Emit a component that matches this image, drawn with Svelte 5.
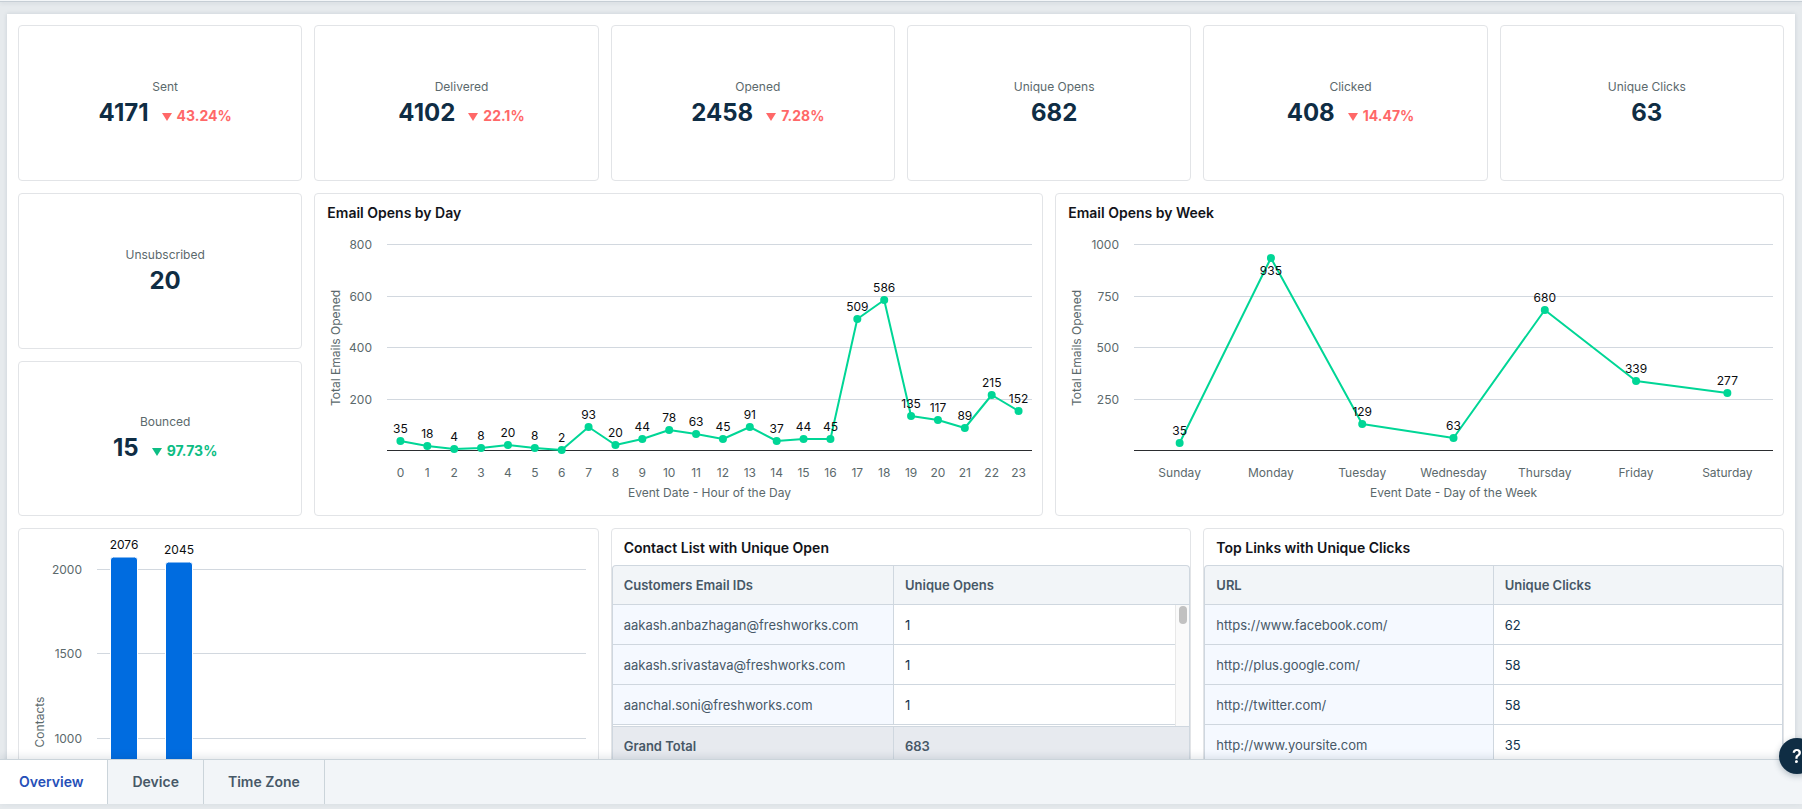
<script>
  const stats = [
    { label: 'Sent', value: '4171', change: '43.24%', tone: 'bad' },
    { label: 'Delivered', value: '4102', change: '22.1%', tone: 'bad' },
    { label: 'Opened', value: '2458', change: '7.28%', tone: 'bad' },
    { label: 'Unique Opens', value: '682' },
    { label: 'Clicked', value: '408', change: '14.47%', tone: 'bad' },
    { label: 'Unique Clicks', value: '63' }
  ];

  const sideStats = [
    { label: 'Unsubscribed', value: '20' },
    { label: 'Bounced', value: '15', change: '97.73%', tone: 'good' }
  ];

  const byDay = {
    title: 'Email Opens by Day',
    xTitle: 'Event Date - Hour of the Day',
    yTitle: 'Total Emails Opened',
    left: 72,
    max: 800,
    ticks: [800, 600, 400, 200],
    labels: Array.from({ length: 24 }, (_, i) => String(i)),
    values: [35, 18, 4, 8, 20, 8, 2, 93, 20, 44, 78, 63, 45, 91, 37, 44, 45, 509, 586, 135, 117, 89, 215, 152]
  };

  const byWeek = {
    title: 'Email Opens by Week',
    xTitle: 'Event Date - Day of the Week',
    yTitle: 'Total Emails Opened',
    left: 78,
    max: 1000,
    ticks: [1000, 750, 500, 250],
    labels: ['Sunday', 'Monday', 'Tuesday', 'Wednesday', 'Thursday', 'Friday', 'Saturday'],
    values: [35, 935, 129, 63, 680, 339, 277]
  };

  const contacts = {
    yTitle: 'Contacts',
    slots: 9,
    ticks: [2000, 1500, 1000],
    values: [2076, 2045]
  };

  const openers = [
    ['aakash.anbazhagan@freshworks.com', '1'],
    ['aakash.srivastava@freshworks.com', '1'],
    ['aanchal.soni@freshworks.com', '1']
  ];

  const links = [
    ['https://www.facebook.com/', '62'],
    ['http://plus.google.com/', '58'],
    ['http://twitter.com/', '58'],
    ['http://www.yoursite.com', '35']
  ];

  const tabs = ['Overview', 'Device', 'Time Zone'];

  const RIGHT = 10;
  const TOP = 14;
  const PLOT_HEIGHT = 206;
  const BAR_ZERO = 377;
  const BAR_WIDTH = 27;

  let active = $state('Overview');
  let dayWidth = $state(727);
  let weekWidth = $state(727);
  let barWidth = $state(579);

  function lineY(chart, value) {
    return TOP + PLOT_HEIGHT * (1 - value / chart.max);
  }

  function points(chart, width) {
    const step = (width - chart.left - RIGHT) / chart.values.length;
    return chart.values.map((value, i) => {
      const y = Math.ceil(lineY(chart, value));
      return {
        value,
        label: chart.labels[i],
        x: chart.left + step * (i + 0.5),
        y,
        // labels that would leave the plot go under the marker
        labelY: y < TOP + 20 ? y + 17 : y - 8
      };
    });
  }

  function barY(value) {
    return BAR_ZERO - (value * 337) / 2000;
  }
</script>

{#snippet statCard(stat)}
  <section class="card stat">
    <span class="stat-label">{stat.label}</span>
    <div class="stat-row">
      <span class="stat-value">{stat.value}</span>
      {#if stat.change}
        <span class="change {stat.tone}">
          <svg viewBox="0 0 10 8" width="10" height="8" fill="currentColor" aria-hidden="true">
            <path d="M0 0h10L5 8z" />
          </svg>
          {stat.change}
        </span>
      {/if}
    </div>
  </section>
{/snippet}

{#snippet lineChart(chart, width)}
  {@const pts = points(chart, width)}
  {@const mid = (chart.left + width - RIGHT) / 2}
  <svg class="chart" {width} height="285" role="img" aria-label={chart.title}>
    {#each chart.ticks as tick}
      {@const y = Math.round(lineY(chart, tick))}
      <rect class="grid-line" x={chart.left} {y} width={width - chart.left - RIGHT} height="1" />
      <text class="axis" x={chart.left - 15} y={y + 5} text-anchor="end">{tick}</text>
    {/each}
    <rect class="base-line" x={chart.left} y={TOP + PLOT_HEIGHT} width={width - chart.left - RIGHT} height="1" />
    <polyline class="series" points={pts.map((p) => `${p.x},${p.y}`).join(' ')} />
    {#each pts as p}
      <circle class="marker" cx={p.x} cy={p.y} r="4" />
      <text class="axis" x={p.x} y="247" text-anchor="middle">{p.label}</text>
    {/each}
    {#each pts as p}
      <text class="data" x={p.x} y={p.labelY} text-anchor="middle">{p.value}</text>
    {/each}
    <text class="axis" x={mid} y="267" text-anchor="middle">{chart.xTitle}</text>
    <text class="axis" transform="translate(25 118) rotate(-90)" text-anchor="middle">{chart.yTitle}</text>
  </svg>
{/snippet}

<div class="app">
  <div class="topbar"></div>

  <main class="board">
    <div class="panel">
      {#each stats as stat}
        {@render statCard(stat)}
      {/each}

      <div class="side">
        {#each sideStats as stat}
          {@render statCard(stat)}
        {/each}
      </div>

      <section class="card wide">
        <h2>{byDay.title}</h2>
        <div class="chart-box" bind:clientWidth={dayWidth}>
          {@render lineChart(byDay, dayWidth)}
        </div>
      </section>

      <section class="card wide">
        <h2>{byWeek.title}</h2>
        <div class="chart-box" bind:clientWidth={weekWidth}>
          {@render lineChart(byWeek, weekWidth)}
        </div>
      </section>

      <section class="card third">
        <div class="chart-box" bind:clientWidth={barWidth}>
          <svg class="chart" width={barWidth} height="440" role="img" aria-label={contacts.yTitle}>
            {#each contacts.ticks as tick}
              {@const y = Math.round(barY(tick))}
              <rect class="grid-line" x="78" {y} width={barWidth - 90} height="1" />
              <text class="axis" x="63" y={y + 5} text-anchor="end">{tick}</text>
            {/each}
            {#each contacts.values as value, i}
              {@const x = Math.round(78 + ((barWidth - 90) / contacts.slots) * (i + 0.5))}
              {@const y = Math.ceil(barY(value))}
              <rect class="bar" x={x - BAR_WIDTH / 2} {y} width={BAR_WIDTH} height={BAR_ZERO - y} rx="3" />
              <text class="data" {x} y={y - 8} text-anchor="middle">{value}</text>
            {/each}
            <rect class="base-line" x="78" y={BAR_ZERO} width={barWidth - 90} height="1" />
            <text class="axis" transform="translate(25 193) rotate(-90)" text-anchor="middle">{contacts.yTitle}</text>
          </svg>
        </div>
      </section>

      <section class="card third">
        <h2>Contact List with Unique Open</h2>
        <table class="scrolling">
          <thead>
            <tr><th>Customers Email IDs</th><th>Unique Opens</th></tr>
          </thead>
          <tbody>
            {#each openers as [email, count]}
              <tr><td>{email}</td><td>{count}</td></tr>
            {/each}
          </tbody>
          <tfoot>
            <tr><td>Grand Total</td><td>683</td></tr>
          </tfoot>
        </table>
      </section>

      <section class="card third">
        <h2>Top Links with Unique Clicks</h2>
        <table>
          <thead>
            <tr><th>URL</th><th>Unique Clicks</th></tr>
          </thead>
          <tbody>
            {#each links as [url, count]}
              <tr><td>{url}</td><td>{count}</td></tr>
            {/each}
          </tbody>
        </table>
      </section>
    </div>
  </main>

  <div class="tabs" role="tablist">
    {#each tabs as tab}
      <button
        class="tab"
        class:active={active === tab}
        role="tab"
        aria-selected={active === tab}
        onclick={() => (active = tab)}
      >
        {tab}
      </button>
    {/each}
  </div>

  <button class="help" title="Help">?</button>
</div>

<style>
  :global(body) {
    margin: 0;
  }

  .app {
    display: flex;
    flex-direction: column;
    height: 100vh;
    box-sizing: border-box;
    padding-bottom: 5px;
    overflow: hidden;
    background: #e6eaed;
    font-family: Inter, 'Liberation Sans', sans-serif;
    font-size: 12px;
    color: #12344d;
  }

  .topbar {
    flex: none;
    height: 1px;
    background: #f3f6f8;
    border-bottom: 1px solid #c6ced5;
    box-shadow: 0 1px 4px rgba(24, 50, 71, 0.12);
  }

  .board {
    flex: 1;
    min-height: 0;
    padding: 12px 7px 0;
    overflow-y: auto;
    scrollbar-width: none;
  }

  .panel {
    display: grid;
    grid-template-columns: repeat(12, minmax(0, 1fr));
    grid-template-rows: 156px 156px 155px;
    grid-auto-rows: minmax(156px, auto);
    gap: 12px;
    padding: 11px;
    background: #fff;
    box-shadow: 0 0 4px rgba(24, 50, 71, 0.14);
  }

  .card {
    box-sizing: border-box;
    border: 1px solid #e2e4e7;
    border-radius: 4px;
    background: #fff;
    overflow: hidden;
  }

  .stat {
    grid-column: span 2;
    display: flex;
    flex-direction: column;
    align-items: center;
    justify-content: center;
    padding: 0 0 0 10px;
  }

  .side {
    grid-column: span 2;
    grid-row: span 2;
    display: grid;
    grid-auto-rows: 1fr;
    gap: 12px;
  }

  .side .stat {
    grid-column: auto;
  }

  .wide {
    grid-column: span 5;
    grid-row: span 2;
  }

  .third {
    grid-column: span 4;
    grid-row: span 3;
  }

  .stat-label {
    line-height: 20px;
    color: #5b696c;
  }

  .stat-row {
    display: flex;
    align-items: baseline;
    gap: 13px;
    height: 32px;
    line-height: 32px;
  }

  .stat-value {
    font-size: 24px;
    font-weight: 700;
    color: #0f2d44;
  }

  .change {
    display: flex;
    align-items: baseline;
    gap: 5px;
    font-size: 14px;
    line-height: 20px;
    font-weight: 700;
  }

  .bad {
    color: #ff6868;
  }

  .good {
    color: #0dbd84;
  }

  h2 {
    margin: 0;
    padding: 9px 12px 7px;
    font-size: 14px;
    line-height: 20px;
    font-weight: 600;
    color: #12141a;
  }

  .chart-box {
    overflow: hidden;
  }

  .chart {
    display: block;
  }

  .axis {
    font-size: 12px;
    fill: #5b696c;
  }

  .data {
    font-size: 12px;
    fill: #0b0d10;
  }

  .grid-line {
    fill: #d2d8df;
  }

  .base-line {
    fill: #2b2d30;
  }

  .series {
    fill: none;
    stroke: #00d696;
    stroke-width: 2;
    stroke-linejoin: round;
  }

  .marker {
    fill: #00d696;
  }

  .bar {
    fill: #006ce0;
    stroke: #fff;
    stroke-width: 1;
  }

  table,
  thead,
  tbody,
  tfoot {
    display: block;
  }

  table {
    font-size: 13px;
    line-height: 20px;
  }

  tr {
    display: grid;
    grid-template-columns: 1fr 1fr;
  }

  th,
  td {
    padding: 10px 11px 9px;
    text-align: left;
    border-bottom: 1px solid #cfd7df;
  }

  th:first-child,
  td:first-child {
    border-right: 1px solid #cfd7df;
  }

  thead {
    background: #f2f5f8;
    border: 1px solid #cfd7df;
    border-bottom: 0;
    border-radius: 4px 4px 0 0;
  }

  th {
    padding: 9px 11px;
    font-weight: 600;
    color: #475867;
  }

  tbody,
  tfoot {
    border: solid #cfd7df;
    border-width: 0 1px;
  }

  td {
    color: #12344d;
  }

  td:first-child {
    background: #f5f9ff;
    color: #475867;
  }

  .scrolling thead tr,
  .scrolling tfoot tr {
    grid-template-columns: calc(50% - 7px) 1fr;
  }

  .scrolling tbody {
    position: relative;
    height: 121px;
    padding-right: 14px;
    overflow: hidden;
  }

  /* scroll track and thumb */
  .scrolling tbody::before {
    content: '';
    position: absolute;
    top: 0;
    right: 0;
    bottom: 0;
    width: 13px;
    background: #fafafa;
    border-left: 1px solid #e8e8e8;
  }

  .scrolling tbody::after {
    content: '';
    position: absolute;
    top: 1px;
    right: 2px;
    width: 8px;
    height: 18px;
    border-radius: 4px;
    background: #c1c1c1;
  }

  .scrolling tfoot td {
    padding: 9px 11px;
    border-top: 1px solid #cfd7df;
    background: #e7eaef;
    font-weight: 600;
    color: #475867;
  }

  .tabs {
    position: relative;
    flex: none;
    display: flex;
    height: 44px;
    border-top: 1px solid #cbd4da;
    background: #f2f5f8;
    box-shadow: 0 -2px 8px rgba(24, 50, 71, 0.12);
  }

  .tab {
    padding: 0 24px 2px;
    border: 0;
    border-right: 1px solid #cbd4da;
    background: none;
    font: 600 14px Inter, 'Liberation Sans', sans-serif;
    color: #475867;
    cursor: pointer;
  }

  .tab:first-child {
    padding-left: 19px;
  }

  .tab.active {
    background: #fff;
    color: #264fb8;
  }

  .help {
    position: fixed;
    right: -13px;
    bottom: 35px;
    width: 36px;
    height: 36px;
    padding: 0;
    border: 0;
    border-radius: 50%;
    background: #0f2d44;
    box-shadow: 0 2px 6px rgba(24, 50, 71, 0.3);
    font: 600 18px Inter, 'Liberation Sans', sans-serif;
    color: #fff;
    cursor: pointer;
  }
</style>
